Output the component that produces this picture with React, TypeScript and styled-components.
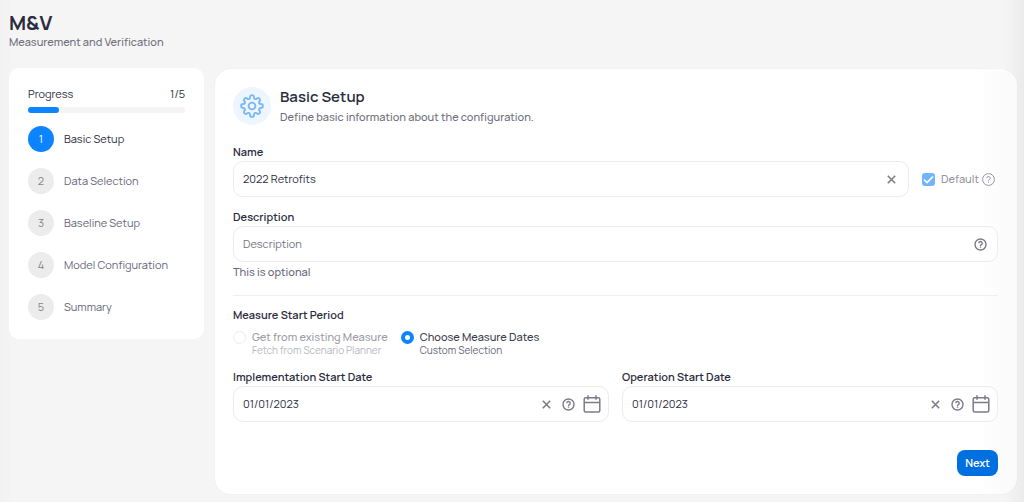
import React, { useState } from "react";
import styled, { createGlobalStyle, css } from "styled-components";

const GlobalStyle = createGlobalStyle`
  *, *::before, *::after { box-sizing: border-box; }
  body {
    margin: 0;
    background: #f5f5f5;
    color: #2b2c40;
    font-family: Manrope, Inter, "Open Sans", sans-serif;
    font-size: 11px;
    font-weight: 500;
    line-height: 14px;
  }
  h1, h2, p, ol, fieldset, legend { margin: 0; padding: 0; border: 0; }
  button, input { font: inherit; }
`;

const Page = styled.div`
  min-height: 100vh;
  padding: 12px 7px 8px 9px;
  background: linear-gradient(to right, #f1f1f1 0, #f5f5f5 12px, #f5f5f5 calc(100% - 20px), #ebebeb 100%);
`;

const PageTitle = styled.h1`
  font-size: 20px;
  line-height: 22px;
  font-weight: 700;
`;

const Subtitle = styled.p`
  margin-top: 1px;
  color: #6f707d;
`;

const Columns = styled.div`
  display: grid;
  grid-template-columns: 195px minmax(0, 1fr);
  gap: 11px;
  align-items: start;
  margin-top: 19px;
`;

const Sidebar = styled.nav`
  padding: 19px;
  border-radius: 10px;
  background: #fff;
  font-weight: 400;
`;

const ProgressHead = styled.div`
  display: flex;
  justify-content: space-between;
`;

const Track = styled.div`
  height: 6px;
  margin-top: 6px;
  border-radius: 3px;
  background: #f4f4f4;
`;

const Fill = styled.div`
  height: 100%;
  border-radius: 3px;
  background: #0d84ff;
`;

const Steps = styled.ol`
  display: grid;
  gap: 16px;
  margin-top: 13px;
  list-style: none;
`;

const Step = styled.li<{ $active: boolean }>`
  display: flex;
  align-items: center;
  gap: 10px;
  color: ${(p) => (p.$active ? "#2b2c40" : "#66677a")};
`;

const StepNumber = styled.span<{ $active: boolean }>`
  display: grid;
  place-items: center;
  width: 26px;
  height: 26px;
  border-radius: 50%;
  background: ${(p) => (p.$active ? "#0d84ff" : "#ececec")};
  color: ${(p) => (p.$active ? "#fff" : "#858585")};
`;

const Panel = styled.form`
  margin-top: 1px;
  padding: 18px 19px 18px 18px;
  border-radius: 16px;
  background: linear-gradient(to right, #fff calc(100% - 40px), #fafafa 100%);
  box-shadow: 0 0 2px rgba(0, 0, 0, 0.06);
`;

const PanelHead = styled.header`
  display: flex;
  align-items: flex-start;
  gap: 9px;
`;

const PanelIcon = styled.span`
  display: grid;
  place-items: center;
  width: 38px;
  height: 38px;
  border-radius: 50%;
  background: #edf6ff;
  color: #7cb8f5;
`;

const PanelTitle = styled.h2`
  font-size: 15px;
  line-height: 20px;
  font-weight: 600;
`;

const PanelText = styled.p`
  margin-top: 1px;
  line-height: 18px;
  color: #6f707d;
`;

const labelStyle = css`
  display: block;
  line-height: 14px;
  font-weight: 600;
`;

const Label = styled.label`
  ${labelStyle}
`;

const Legend = styled.legend`
  ${labelStyle}
`;

const Field = styled.div`
  flex: 1;
  min-width: 0;
`;

const FieldRow = styled.div<{ $top: number }>`
  display: flex;
  gap: 13px;
  align-items: flex-end;
  margin-top: ${(p) => p.$top}px;
`;

const Box = styled.div<{ $end: number }>`
  display: flex;
  align-items: center;
  height: 36px;
  margin-top: 2px;
  padding: 0 ${(p) => p.$end}px 0 9px;
  border: 1px solid #ececf0;
  border-radius: 10px;
  background: #fff;
  color: #7c7c88;
`;

const TextInput = styled.input`
  flex: 1;
  min-width: 0;
  padding: 0;
  border: 0;
  outline: 0;
  background: transparent;
  color: #2b2c40;
  font-weight: 400;
  &::placeholder { color: #72737f; opacity: 1; }
`;

const IconButton = styled.button<{ $start?: number }>`
  display: grid;
  place-items: center;
  margin-left: ${(p) => p.$start ?? 0}px;
  padding: 0;
  border: 0;
  background: transparent;
  color: inherit;
  cursor: pointer;
`;

const DefaultOption = styled.div`
  display: flex;
  align-items: center;
  height: 36px;
  padding-right: 3px;
  color: #9596a1;
`;

const CheckLabel = styled.label`
  display: flex;
  align-items: center;
  gap: 6px;
`;

const Checkbox = styled.input`
  appearance: none;
  width: 13px;
  height: 13px;
  margin: 0;
  border-radius: 3px;
  background: #b9b9c0;
  &:checked {
    background: #72b5fa
      url("data:image/svg+xml,%3Csvg xmlns='http://www.w3.org/2000/svg' viewBox='0 0 13 13' fill='none' stroke='white' stroke-width='1.6'%3E%3Cpath d='M2 6.5l3 3L11 3.5'/%3E%3C/svg%3E");
  }
`;

const Hint = styled.p`
  margin-top: 3px;
  color: #66677a;
`;

const Divider = styled.hr`
  height: 1px;
  margin: 16px 0 12px;
  border: 0;
  background: #f0f0f2;
`;

const Choices = styled.div`
  display: flex;
  gap: 13px;
  margin-top: 8px;
`;

const Choice = styled.label<{ $off?: boolean }>`
  display: flex;
  gap: 6px;
  color: ${(p) => (p.$off ? "#9c9ca5" : "#3d3e4e")};
`;

const Radio = styled.input`
  appearance: none;
  width: 13px;
  height: 13px;
  margin: 1px 0 0;
  border: 1px solid #ececec;
  border-radius: 50%;
  background: #fff;
  &:checked { border: 4px solid #0d84ff; }
`;

const ChoiceNote = styled.small<{ $off?: boolean }>`
  display: block;
  font-size: 10px;
  font-weight: 400;
  line-height: 12px;
  color: ${(p) => (p.$off ? "#b8b8be" : "#66677a")};
`;

const Actions = styled.footer`
  display: flex;
  justify-content: flex-end;
  margin-top: 28px;
`;

const NextButton = styled.button`
  height: 26px;
  padding: 0 8px;
  border: 0;
  border-radius: 8px;
  background: #0070e0;
  color: #fff;
  font-weight: 600;
  cursor: pointer;
`;

const GearIcon = () => (
  <svg width="24" height="24" viewBox="0 0 24 24" fill="none" stroke="currentColor" strokeWidth="1.9" strokeLinejoin="round" aria-hidden="true">
    <circle cx="12" cy="12" r="3.4" />
    <path d="M10 3.1a2 2 0 0 1 4 0v.5a1.6 1.6 0 0 0 2.7 1.1l.4-.4a2 2 0 0 1 2.7 2.7l-.4.4a1.6 1.6 0 0 0 1.1 2.6h.4a2 2 0 0 1 0 4h-.4a1.6 1.6 0 0 0-1.1 2.6l.4.4a2 2 0 0 1-2.7 2.7l-.4-.4a1.6 1.6 0 0 0-2.7 1.1v.5a2 2 0 0 1-4 0v-.5a1.6 1.6 0 0 0-2.7-1.1l-.4.4A2 2 0 0 1 4.2 17l.4-.4A1.6 1.6 0 0 0 3.5 14h-.4a2 2 0 0 1 0-4h.4a1.6 1.6 0 0 0 1.1-2.6L4.2 7a2 2 0 0 1 2.7-2.7l.4.4A1.6 1.6 0 0 0 10 3.6z" />
  </svg>
);

const ClearIcon = () => (
  <svg width="9" height="9" viewBox="0 0 9 9" stroke="currentColor" strokeWidth="1.6" aria-hidden="true">
    <path d="M.8.8l7.4 7.4M8.2.8L.8 8.2" />
  </svg>
);

const HelpIcon = ({ thin }: { thin?: boolean }) => (
  <svg width="13" height="13" viewBox="0 0 13 13" fill="none" stroke="currentColor" strokeWidth={thin ? 1 : 1.4} aria-hidden="true">
    <circle cx="6.5" cy="6.5" r={thin ? 5.9 : 5.5} />
    <path d="M4.8 5.2a1.7 1.7 0 1 1 2.5 1.5q-.8.4-.8 1.2M6.5 8.6v1.2" />
  </svg>
);

const CalendarIcon = () => (
  <svg width="18" height="18" viewBox="0 0 18 18" fill="none" stroke="currentColor" strokeWidth="1.5" aria-hidden="true">
    <rect x="1.2" y="2.7" width="15.6" height="14.4" rx="1.5" />
    <path d="M1.2 7.4h15.6M5 .3v4.4M13 .3v4.4" />
  </svg>
);

const steps = ["Basic Setup", "Data Selection", "Baseline Setup", "Model Configuration", "Summary"];

function DateField({ id, label }: { id: string; label: string }) {
  const [value, setValue] = useState("01/01/2023");
  return (
    <Field>
      <Label htmlFor={id}>{label}</Label>
      <Box $end={7}>
        <TextInput id={id} value={value} onChange={(e) => setValue(e.target.value)} />
        <IconButton type="button" aria-label={`Clear ${label}`} onClick={() => setValue("")}><ClearIcon /></IconButton>
        <IconButton type="button" aria-label="Help" $start={11}><HelpIcon /></IconButton>
        <IconButton type="button" aria-label="Open calendar" $start={8}><CalendarIcon /></IconButton>
      </Box>
    </Field>
  );
}

export default function App() {
  const current = 1;
  const [name, setName] = useState("2022 Retrofits");
  return (
    <>
      <GlobalStyle />
      <Page>
        <PageTitle>M&amp;V</PageTitle>
        <Subtitle>Measurement and Verification</Subtitle>
        <Columns>
          <Sidebar aria-label="Progress">
            <ProgressHead>
              <span>Progress</span>
              <span>{current}/{steps.length}</span>
            </ProgressHead>
            <Track><Fill style={{ width: `${(current / steps.length) * 100}%` }} /></Track>
            <Steps>
              {steps.map((step, i) => (
                <Step key={step} $active={i + 1 === current}>
                  <StepNumber $active={i + 1 === current}>{i + 1}</StepNumber>
                  {step}
                </Step>
              ))}
            </Steps>
          </Sidebar>
          <Panel onSubmit={(e) => e.preventDefault()}>
            <PanelHead>
              <PanelIcon><GearIcon /></PanelIcon>
              <div>
                <PanelTitle>Basic Setup</PanelTitle>
                <PanelText>Define basic information about the configuration.</PanelText>
              </div>
            </PanelHead>
            <FieldRow $top={19}>
              <Field>
                <Label htmlFor="name">Name</Label>
                <Box $end={12}>
                  <TextInput id="name" value={name} onChange={(e) => setName(e.target.value)} />
                  <IconButton type="button" aria-label="Clear name" onClick={() => setName("")}><ClearIcon /></IconButton>
                </Box>
              </Field>
              <DefaultOption>
                <CheckLabel><Checkbox type="checkbox" defaultChecked />Default</CheckLabel>
                <IconButton type="button" aria-label="About default" $start={3}><HelpIcon thin /></IconButton>
              </DefaultOption>
            </FieldRow>
            <FieldRow $top={13}>
              <Field>
                <Label htmlFor="description">Description</Label>
                <Box $end={10}>
                  <TextInput id="description" placeholder="Description" />
                  <IconButton type="button" aria-label="Help"><HelpIcon /></IconButton>
                </Box>
              </Field>
            </FieldRow>
            <Hint>This is optional</Hint>
            <Divider />
            <fieldset>
              <Legend>Measure Start Period</Legend>
              <Choices>
                <Choice $off>
                  <Radio type="radio" name="period" disabled />
                  <span>Get from existing Measure<ChoiceNote $off>Fetch from Scenario Planner</ChoiceNote></span>
                </Choice>
                <Choice>
                  <Radio type="radio" name="period" defaultChecked />
                  <span>Choose Measure Dates<ChoiceNote>Custom Selection</ChoiceNote></span>
                </Choice>
              </Choices>
            </fieldset>
            <FieldRow $top={14}>
              <DateField id="implementation-date" label="Implementation Start Date" />
              <DateField id="operation-date" label="Operation Start Date" />
            </FieldRow>
            <Actions><NextButton type="submit">Next</NextButton></Actions>
          </Panel>
        </Columns>
      </Page>
    </>
  );
}
